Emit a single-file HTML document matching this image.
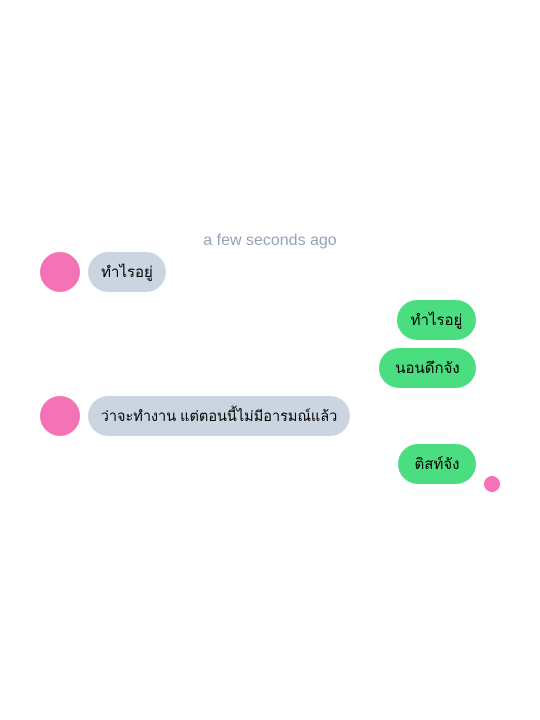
<!DOCTYPE html>
<html><head><meta charset="utf-8"><style>
body{margin:0;width:540px;height:720px;background:#fff;position:relative;overflow:hidden;font-family:"Liberation Sans","DejaVu Sans",sans-serif;}
.t{position:absolute;left:0;width:540px;top:231px;text-align:center;color:#94a3b8;font-size:16px;line-height:20px;}
.av{position:absolute;left:40px;width:40px;height:40px;border-radius:50%;background:#f472b6;}
.b{position:absolute;height:40px;border-radius:20px;box-sizing:border-box;padding-top:2px;line-height:38px;font-size:15px;color:#000;text-align:center;white-space:nowrap;}
.l{background:#cbd5e1;left:88px;}
.r{background:#4ade80;}
</style></head><body>
<div class="t">a few seconds ago</div>
<div class="av" style="top:252px"></div>
<div class="b l" style="top:252px;width:78px">ทำไรอยู่</div>
<div class="b r" style="top:300px;left:397px;width:79px">ทำไรอยู่</div>
<div class="b r" style="top:348px;left:379px;width:97px">นอนดึกจัง</div>
<div class="av" style="top:396px"></div>
<div class="b l" style="top:396px;width:262px;font-size:14.5px">ว่าจะทำงาน แต่ตอนนี้ไม่มีอารมณ์แล้ว</div>
<div class="b r" style="top:444px;left:398px;width:78px">ติสท์จัง</div>
<div style="position:absolute;left:484px;top:476px;width:16px;height:16px;border-radius:50%;background:#f472b6"></div>
</body></html>
